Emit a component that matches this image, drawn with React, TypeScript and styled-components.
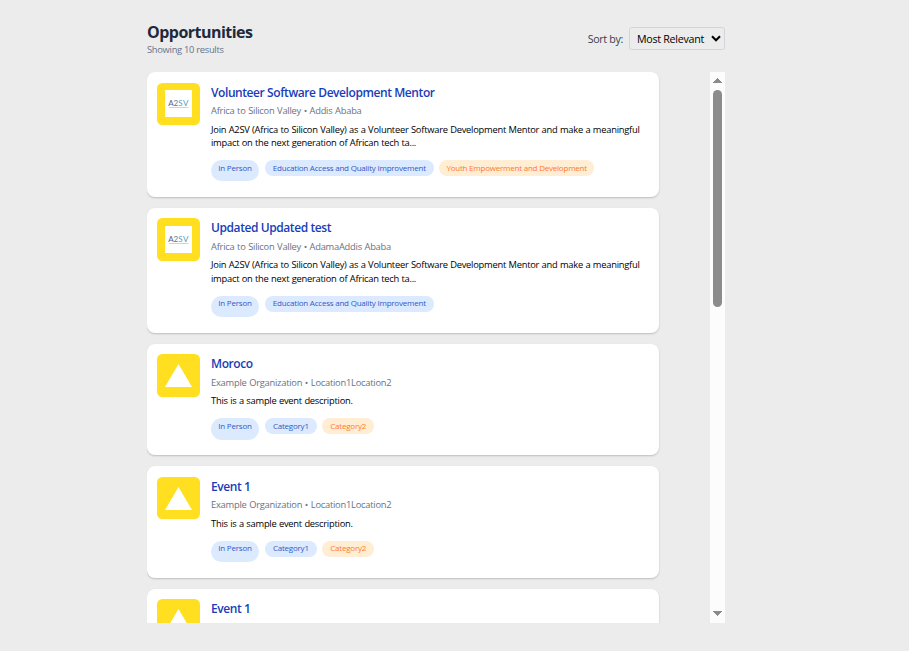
import React from "react";
import styled, { createGlobalStyle } from "styled-components";

const GlobalStyle = createGlobalStyle`
  * { box-sizing: border-box; }
  body {
    margin: 0;
    background: #ececec;
    font-family: "Segoe UI", "Open Sans", "Noto Sans", sans-serif;
    overflow: hidden;
  }
  h1, h2, p { margin: 0; }
`;

const Page = styled.main`
  width: 578px;
  height: 623px;
  margin-left: 147px;
  padding-top: 22px;
  display: flex;
  flex-direction: column;
`;

const Header = styled.header`
  height: 50px;
  flex: none;
  display: flex;
  justify-content: space-between;
`;

const Heading = styled.h1`
  font-size: 16px;
  line-height: 21.33px;
  font-weight: 700;
  color: #1e293b;
  white-space: nowrap;
  letter-spacing: -0.53px;
`;

const ResultCount = styled.p`
  font-size: 9.33px;
  line-height: 13.33px;
  color: #64748b;
  white-space: nowrap;
  letter-spacing: -0.28px;
`;

const SortControl = styled.div`
  height: 23px;
  margin-top: 5px;
  display: flex;
  align-items: center;
  gap: 6px;
`;

const SortLabel = styled.span`
  font-size: 10.67px;
  color: #374151;
  white-space: nowrap;
  letter-spacing: -0.32px;
`;

const SortButton = styled.button`
  width: 96px;
  height: 23px;
  padding: 0 3px 0 7px;
  display: flex;
  align-items: center;
  justify-content: space-between;
  background: transparent;
  border: 1px solid #d1d5db;
  border-radius: 2.67px;
  color: #000;
  font-family: inherit;
  font-size: 10.67px;
  letter-spacing: -0.27px;
  white-space: nowrap;
`;

const ListArea = styled.div`
  height: 551px;
  flex: none;
  display: flex;
  justify-content: space-between;
  overflow: hidden;
`;

const CardList = styled.div`
  width: 512px;
  display: flex;
  flex-direction: column;
  gap: 10.67px;
`;

const Card = styled.article<{ $tall?: boolean }>`
  flex: none;
  height: ${(p) => (p.$tall ? "125.13px" : "111.9px")};
  padding: 10.67px 10px;
  display: flex;
  gap: 11px;
  background: #fff;
  border-radius: 8px;
  box-shadow: 0 1px 2px rgba(0, 0, 0, 0.2);
`;

const LogoTile = styled.div`
  width: 43px;
  height: 42.67px;
  flex: none;
  display: flex;
  align-items: center;
  justify-content: center;
  background: #ffdf20;
  border-radius: 5.33px;
`;

const CardBody = styled.div`
  min-width: 0;
  flex: 1;
`;

const CardTitle = styled.h2`
  padding-top: 1px;
  height: 18.67px;
  font-size: 12px;
  line-height: 18.67px;
  font-weight: 600;
  color: #193cb8;
  white-space: nowrap;
  letter-spacing: -0.42px;
`;

const Meta = styled.p`
  margin-top: 2.67px;
  font-size: 9.33px;
  line-height: 13.33px;
  color: #6a7282;
  white-space: nowrap;
  letter-spacing: -0.24px;
  word-spacing: 0.45px;
`;

const Description = styled.p`
  margin-top: 5.33px;
  font-size: 9.33px;
  line-height: 13.33px;
  color: #000;
  white-space: pre;
  letter-spacing: -0.24px;
  word-spacing: 0.28px;
`;

const Tags = styled.div`
  margin-top: 10.67px;
  display: flex;
  align-items: flex-start;
  gap: 5.33px;
`;

type Tone = "blue" | "orange";

const Tag = styled.span<{ $tone: Tone; $width: number; $mode?: boolean }>`
  width: ${(p) => p.$width}px;
  height: ${(p) => (p.$mode ? 21.33 : 16)}px;
  margin-right: ${(p) => (p.$mode ? 0.5 : 0)}px;
  padding-top: 2.67px;
  flex: none;
  text-align: center;
  font-size: 8px;
  line-height: 10.67px;
  white-space: nowrap;
  letter-spacing: -0.22px;
  border-radius: 11px;
  color: ${(p) => (p.$tone === "blue" ? "#3558c5" : "#ff7a30")};
  background: ${(p) => (p.$tone === "blue" ? "#dbeafe" : "#ffedd4")};
`;

const Scrollbar = styled.div`
  width: 15px;
  height: 551px;
  padding: 6px 0 7px;
  display: flex;
  flex-direction: column;
  align-items: center;
  background: #fcfcfc;
`;

const Thumb = styled.div`
  width: 9px;
  height: 217px;
  margin-top: 7px;
  margin-bottom: auto;
  border-radius: 4.5px;
  background: #8b8b8b;
`;

const ArrowIcon = styled.svg`
  display: block;
  flex: none;
`;

const Arrow = ({ down = false }: { down?: boolean }) => (
  <ArrowIcon width="9" height="5" viewBox="0 0 9 5" shapeRendering="crispEdges">
    <path d={down ? "M0 0H9L4.5 5Z" : "M0 5H9L4.5 0Z"} fill="#8b8b8b" />
  </ArrowIcon>
);

const Chevron = () => (
  <svg width="10" height="7" viewBox="0 0 10 7">
    <path d="M1 1.3L5 5.2L9 1.3" fill="none" stroke="#000" strokeWidth="2.1" />
  </svg>
);

const LogoText = styled.text`
  font-family: "Lato", sans-serif;
  font-size: 8px;
  font-weight: 400;
`;

const A2svLogo = () => (
  <svg width="27" height="27" viewBox="0 0 27 27">
    <rect width="27" height="27" fill="#fff" />
    <LogoText x="3.2" y="15.8" fill="#53638c">A</LogoText>
    <LogoText x="8.6" y="15.8" fill="#557d9b">2</LogoText>
    <LogoText x="13.3" y="15.8" fill="#5aa0ba">S</LogoText>
    <LogoText x="18" y="15.8" fill="#5f91b4">V</LogoText>
    <path d="M4 17.5H23.5" stroke="#b5cbd8" strokeWidth=".8" />
  </svg>
);

const TriangleLogo = () => (
  <svg width="27" height="23" viewBox="0 0 27 23">
    <path d="M13.5 0L27 23H0Z" fill="#fff" />
  </svg>
);

interface TagData {
  label: string;
  tone: Tone;
  width: number;
}

interface Details {
  meta: string;
  description: string;
  tags: TagData[];
}

interface Opportunity {
  title: string;
  a2sv?: boolean;
  details?: Details;
}

const education: TagData = { label: "Education Access and Quality Improvement", tone: "blue", width: 169 };
const youth: TagData = { label: "Youth Empowerment and Development", tone: "orange", width: 155 };
const mentorText =
  "Join A2SV (Africa to Silicon Valley) as a Volunteer Software Development Mentor and make a meaningful\nimpact on the next generation of African tech ta...";
const sample: Details = {
  meta: "Example Organization • Location1Location2",
  description: "This is a sample event description.",
  tags: [
    { label: "Category1", tone: "blue", width: 52 },
    { label: "Category2", tone: "orange", width: 52 },
  ],
};

const opportunities: Opportunity[] = [
  {
    title: "Volunteer Software Development Mentor",
    a2sv: true,
    details: { meta: "Africa to Silicon Valley • Addis Ababa", description: mentorText, tags: [education, youth] },
  },
  {
    title: "Updated Updated test",
    a2sv: true,
    details: { meta: "Africa to Silicon Valley • AdamaAddis Ababa", description: mentorText, tags: [education] },
  },
  { title: "Moroco", details: sample },
  { title: "Event 1", details: sample },
  { title: "Event 1" },
];

const OpportunityCard = ({ title, a2sv, details }: Opportunity) => (
  <Card $tall={a2sv}>
    <LogoTile>{a2sv ? <A2svLogo /> : <TriangleLogo />}</LogoTile>
    <CardBody>
      <CardTitle>{title}</CardTitle>
      {details && (
        <>
          <Meta>{details.meta}</Meta>
          <Description>{details.description}</Description>
          <Tags>
            <Tag $tone="blue" $width={48} $mode>In Person</Tag>
            {details.tags.map((tag) => (
              <Tag key={tag.label} $tone={tag.tone} $width={tag.width}>{tag.label}</Tag>
            ))}
          </Tags>
        </>
      )}
    </CardBody>
  </Card>
);

export default function App() {
  return (
    <>
      <GlobalStyle />
      <Page>
        <Header>
          <div>
            <Heading>Opportunities</Heading>
            <ResultCount>Showing 10 results</ResultCount>
          </div>
          <SortControl>
            <SortLabel>Sort by:</SortLabel>
            <SortButton>
              Most Relevant
              <Chevron />
            </SortButton>
          </SortControl>
        </Header>
        <ListArea>
          <CardList>
            {opportunities.map((item, i) => (
              <OpportunityCard key={i} {...item} />
            ))}
          </CardList>
          <Scrollbar>
            <Arrow />
            <Thumb />
            <Arrow down />
          </Scrollbar>
        </ListArea>
      </Page>
    </>
  );
}
